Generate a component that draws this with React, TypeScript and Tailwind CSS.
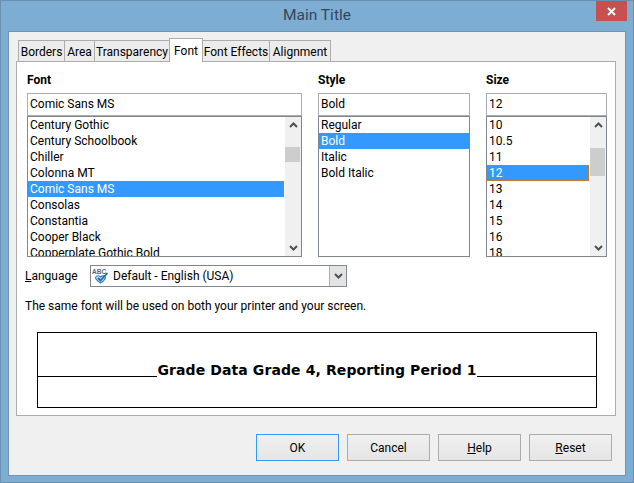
import React from "react";

const ui = { fontFamily: 'Roboto, "Open Sans", sans-serif' };

function Chevron({ up }: { up?: boolean }) {
  return (
    <svg width="9" height="6" viewBox="0 0 9 6" className="block">
      <path d={up ? "M1 5 L4.5 1.5 L8 5" : "M1 1 L4.5 4.5 L8 1"} fill="none" stroke="#505050" strokeWidth="2" />
    </svg>
  );
}

function ListBox({ items, selected, focus, thumbTop, thumbH, w, scroll }: { items: string[]; selected: string; focus?: boolean; thumbTop?: string; thumbH?: string; w: string; scroll: boolean }) {
  return (
    <div className={`${w} h-[141px] border border-[#82878f] flex bg-white overflow-hidden`}>
      <div className="flex-1 min-w-0 flex flex-col">
        {items.map((t) => (
          <div
            key={t}
            className={`h-4 shrink-0 pl-[1px] text-[12px] whitespace-nowrap ${t === selected ? "bg-[#3399ff] text-white" : "text-black"} ${t === selected && focus ? "border border-dotted border-[#c77b2a] leading-[14px]" : "leading-[16px] border border-transparent border-y-0"}`}
          >
            {t}
          </div>
        ))}
      </div>
      {scroll && (
        <div className="w-[16px] ml-[1px] shrink-0 bg-[#f0f0f0] flex flex-col items-center justify-between py-[5px] relative">
          <Chevron up />
          <div className={`absolute left-0 w-[15px] bg-[#cdcdcd] ${thumbTop} ${thumbH}`} />
          <Chevron />
        </div>
      )}
    </div>
  );
}

function Col({ label, value, w, children }: { label: string; value: string; w: string; children: React.ReactNode }) {
  return (
    <div className={`${w} flex flex-col`}>
      <div className="h-[31px] text-[12px] font-bold leading-[16px] pt-[10px] text-black">{label}</div>
      <div className="h-[23px] border border-[#abadb3] bg-white pl-[2px] text-[12px] leading-[21px] text-black">{value}</div>
      {children}
    </div>
  );
}

function Tab({ label, w, active }: { label: string; w: string; active?: boolean }) {
  return active ? (
    <div className={`${w} h-[24px] -mb-[1px] relative z-10 bg-white border border-b-0 border-[#acacac] -ml-[1px] text-[12px] leading-[24px] text-center text-black`}>{label}</div>
  ) : (
    <div className={`${w} h-[21px] bg-[#ececec] border border-b-0 border-[#acacac] -ml-[1px] first:ml-0 text-[12px] leading-[22px] text-center text-black`}>{label}</div>
  );
}

function Btn({ children, focus }: { children: React.ReactNode; focus?: boolean }) {
  return (
    <div className={`w-[83px] h-[27px] border ${focus ? "border-[#3399ff]" : "border-[#acacac]"} bg-linear-to-b from-[#f0f0f0] to-[#e5e5e5] text-[12px] leading-[27px] text-center text-black`}>
      {children}
    </div>
  );
}

export default function App() {
  return (
    <div style={ui} className="w-[634px] h-[483px] bg-[#7eadd4] border border-[#6a8fb0] flex flex-col overflow-hidden">
      <div className="h-[30px] shrink-0 relative flex items-center justify-center text-[15.5px] text-[#33475a]">
        Main Title
        <div className="absolute right-[6px] top-0 w-[31px] h-[20px] bg-[#c75050] flex items-center justify-center">
          <svg width="9" height="9" viewBox="0 0 9 9">
            <path d="M1 1 L8 8 M8 1 L1 8" stroke="#fff" strokeWidth="2" />
          </svg>
        </div>
      </div>
      <div className="mx-[7px] h-[445px] border border-[#6f94b5] bg-[#f0f0f0] pl-[7px] pr-[9px] pt-[8px] flex flex-col">
        <div className="h-[21px] pl-[2px] flex items-end">
          <Tab label="Borders" w="w-[47px]" />
          <Tab label="Area" w="w-[31px]" />
          <Tab label="Transparency" w="w-[76px]" />
          <Tab label="Font" w="w-[34px]" active />
          <Tab label="Font Effects" w="w-[68px]" />
          <Tab label="Alignment" w="w-[62px]" />
        </div>
        <div className="h-[355px] w-[600px] border border-[#acacac] bg-white pl-[10px] pr-[8px] flex flex-col">
          <div className="flex gap-[16px]">
            <Col label="Font" value="Comic Sans MS" w="w-[275px]">
              <ListBox w="w-[275px]" scroll selected="Comic Sans MS" thumbTop="top-[30px]" thumbH="h-[15px]" items={["Century Gothic","Century Schoolbook","Chiller","Colonna MT","Comic Sans MS","Consolas","Constantia","Cooper Black","Copperplate Gothic Bold"]} />
            </Col>
            <Col label="Style" value="Bold" w="w-[152px]">
              <ListBox w="w-[152px]" scroll={false} selected="Bold" items={["Regular","Bold","Italic","Bold Italic"]} />
            </Col>
            <Col label="Size" value="12" w="w-[121px]">
              <ListBox w="w-[121px]" scroll focus selected="12" thumbTop="top-[31px]" thumbH="h-[28px]" items={["10","10.5","11","12","13","14","15","16","18"]} />
            </Col>
          </div>
          <div className="mt-[8px] -ml-[2px] flex items-center h-[22px]">
            <div className="w-[65px] text-[12px] text-black"><span className="underline">L</span>anguage</div>
            <div className="w-[257px] h-[22px] border border-[#82878f] bg-white flex items-center text-[12px] text-black">
              <svg width="18" height="16" viewBox="0 0 18 16" className="ml-[1px] mr-[3px] shrink-0">
                <text x="0" y="6" fontSize="6.5" fontWeight="700" fill="#5a6672" fontFamily="Liberation Sans">ABC</text>
                <path d="M3.5 9.5 C5 7 7.5 7.5 8.5 9 C10 7.5 12.5 7.5 13.5 9.5 C13.5 11.5 10.5 13.5 8.5 15 C6.5 13.5 3.5 11.5 3.5 9.5 Z" fill="#cfe6f7" stroke="#2f7fc4" strokeWidth="1.2" />
                <path d="M6 10 L8.5 12.5 L15.5 5" fill="none" stroke="#1a67ad" strokeWidth="1.8" />
              </svg>
              <span className="flex-1">Default - English (USA)</span>
              <div className="w-[17px] h-[20px] bg-[#e3e3e3] border-l border-[#acacac] flex items-center justify-center">
                <Chevron />
              </div>
            </div>
          </div>
          <div className="mt-[11px] -ml-[2px] text-[12px] leading-[16px] text-black whitespace-nowrap">The same font will be used on both your printer and your screen.</div>
          <div className="mt-[18px] ml-[10px] w-[560px] h-[76px] border border-black flex items-center">
            <div className="flex-1 h-[1px] bg-black mt-[13px]" />
            <div style={{ fontFamily: '"DejaVu Sans", sans-serif' }} className="text-[14px] font-bold leading-[20px] tracking-[0.1px] whitespace-nowrap text-black">Grade Data Grade 4, Reporting Period 1</div>
            <div className="flex-1 h-[1px] bg-black mt-[13px]" />
          </div>
        </div>
        <div className="mt-[18px] flex justify-end gap-[8px] pr-[4px]">
          <Btn focus>OK</Btn>
          <Btn>Cancel</Btn>
          <Btn><span className="underline">H</span>elp</Btn>
          <Btn><span className="underline">R</span>eset</Btn>
        </div>
      </div>
    </div>
  );
}
